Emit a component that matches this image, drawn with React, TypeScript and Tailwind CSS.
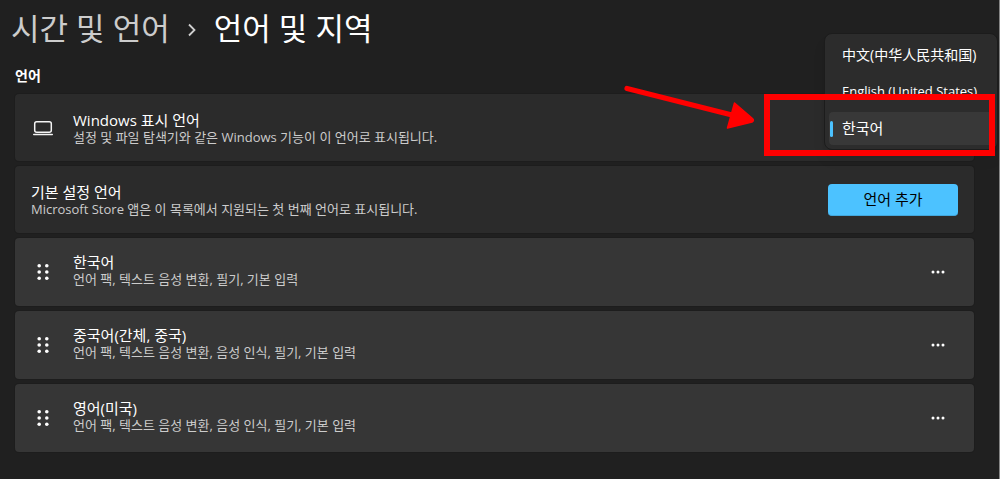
import { useState } from "react";

const languages = [
  { name: "한국어", features: "언어 팩, 텍스트 음성 변환, 필기, 기본 입력" },
  { name: "중국어(간체, 중국)", features: "언어 팩, 텍스트 음성 변환, 음성 인식, 필기, 기본 입력" },
  { name: "영어(미국)", features: "언어 팩, 텍스트 음성 변환, 음성 인식, 필기, 기본 입력" },
];

const displayOptions = [
  { label: "中文(中华人民共和国)", lang: "zh-CN", size: "text-[14px]" },
  { label: "English (United States)", lang: "en-US", size: "text-[13px]" },
  { label: "한국어", lang: "ko", size: "text-[15px]" },
];

function LaptopIcon() {
  return (
    <svg width="20" height="16" viewBox="0 0 20 16" fill="none" stroke="#f4f4f4" aria-hidden="true">
      <rect x="1.7" y="1.7" width="16.6" height="10.6" rx="2" strokeWidth="1.5" />
      <path d="M0.7 14.5H19.3" strokeWidth="1.4" strokeLinecap="round" />
    </svg>
  );
}

function GripIcon() {
  return (
    <svg width="12" height="18" viewBox="0 0 12 18" fill="#ffffff" aria-hidden="true">
      {[2.8, 9, 15.2].map((y) => (
        <g key={y}>
          <circle cx="2.2" cy={y} r="1.8" />
          <circle cx="9.8" cy={y} r="1.8" />
        </g>
      ))}
    </svg>
  );
}

function MoreIcon() {
  return (
    <svg width="14" height="4" viewBox="0 0 14 4" fill="#ffffff" aria-hidden="true">
      <circle cx="2" cy="2" r="1.5" />
      <circle cx="7" cy="2" r="1.5" />
      <circle cx="12" cy="2" r="1.5" />
    </svg>
  );
}

function CardText({ id, title, text }: { id?: string; title: string; text: string }) {
  return (
    <div className="min-w-0 flex-1">
      <h3 id={id} className="text-[15px] leading-[18px] text-white">{title}</h3>
      <p className="text-[13px] leading-4 text-[#cccccc]">{text}</p>
    </div>
  );
}

function LanguageMenu() {
  const [selected, setSelected] = useState("ko");
  return (
    <ul
      role="listbox"
      aria-labelledby="display-language"
      className="absolute top-[33px] right-px w-[174px] rounded-lg border border-[#1c1c1c] bg-[#2c2c2c] p-1 shadow-lg"
    >
      {displayOptions.map(({ label, lang, size }) => (
        <li key={lang} role="presentation" className="pb-1 last:pb-0">
          <button
            type="button"
            role="option"
            lang={lang}
            aria-selected={selected === lang}
            onClick={() => setSelected(lang)}
            className={
              "flex h-[33px] w-full items-center rounded text-left whitespace-nowrap text-white " +
              size +
              (selected === lang ? " bg-[#383838]" : "")
            }
          >
            <span
              className={"mr-[9px] ml-px h-4 w-[3px] shrink-0 rounded-full " + (selected === lang ? "bg-[#4cc2ff]" : "")}
            />
            {label}
          </button>
        </li>
      ))}
    </ul>
  );
}

function Callout() {
  return (
    <div className="pointer-events-none absolute top-[82px] right-1 flex items-start" aria-hidden="true">
      <svg width="134" height="52" viewBox="0 0 134 52" className="mr-2">
        <path d="M5 6.500L110 33" stroke="#ff0000" strokeWidth="5.2" strokeLinecap="round" />
        <path
          d="M112.500 21L130.500 36.600Q132.500 38.500 130 40L105.500 46Z"
          fill="#ff0000"
          stroke="#ff0000"
          strokeWidth="1.500"
          strokeLinejoin="round"
        />
      </svg>
      <div className="mt-3 h-[62px] w-[231px] border-6 border-[#ff0000]" />
    </div>
  );
}

export default function App() {
  return (
    <div
      lang="ko"
      className="relative min-h-screen border-r border-[#858585] bg-[#202020] pr-[25px] pl-[15px] font-['Open_Sans','Noto_Sans_CJK_KR',sans-serif] text-white"
    >
      <nav aria-label="위치" className="-ml-1 flex h-14 items-center text-[31px] leading-10">
        <a href="#time" className="text-[#cccccc]">시간 및 언어</a>
        <svg width="8" height="14" viewBox="0 0 8 14" className="mx-[18px] mt-1" fill="none" stroke="#d0d0d0" strokeWidth="1.8" aria-hidden="true">
          <path d="M1 1.500L6.500 7L1 12.500" />
        </svg>
        <h1 aria-current="page">언어 및 지역</h1>
      </nav>

      <main>
        <h2 className="pt-[10px] pb-2 text-sm leading-5 font-bold">언어</h2>
        <div className="flex flex-col gap-[5px]">
          <section className="flex min-h-[67px] items-center rounded bg-[#2b2b2b] pl-[18px] ring-1 ring-[#1d1d1d]">
            <div className="mr-5 w-5">
              <LaptopIcon />
            </div>
            <CardText
              id="display-language"
              title="Windows 표시 언어"
              text="설정 및 파일 탐색기와 같은 Windows 기능이 이 언어로 표시됩니다."
            />
          </section>
          <section className="flex min-h-[67px] items-center rounded bg-[#2b2b2b] pr-4 pl-4 ring-1 ring-[#1d1d1d]">
            <CardText title="기본 설정 언어" text="Microsoft Store 앱은 이 목록에서 지원되는 첫 번째 언어로 표시됩니다." />
            <button
              type="button"
              className="h-8 w-[130px] rounded border-b border-[#42a7dc] bg-[#4cc2ff] text-[15px] leading-5 text-black"
            >
              언어 추가
            </button>
          </section>
          <ul className="flex flex-col gap-[5px]">
            {languages.map(({ name, features }) => (
              <li
                key={name}
                className="flex min-h-[68px] items-center rounded bg-[#363636] pr-[17px] pl-[22px] ring-1 ring-[#1d1d1d]"
              >
                <div className="mr-6 w-3">
                  <GripIcon />
                </div>
                <div className="flex-1 pb-1">
                  <CardText title={name} text={features} />
                </div>
                <button type="button" aria-label={name + " 옵션"} className="flex h-8 w-[38px] items-center justify-center">
                  <MoreIcon />
                </button>
              </li>
            ))}
          </ul>
        </div>
      </main>

      <LanguageMenu />
      <Callout />
    </div>
  );
}
